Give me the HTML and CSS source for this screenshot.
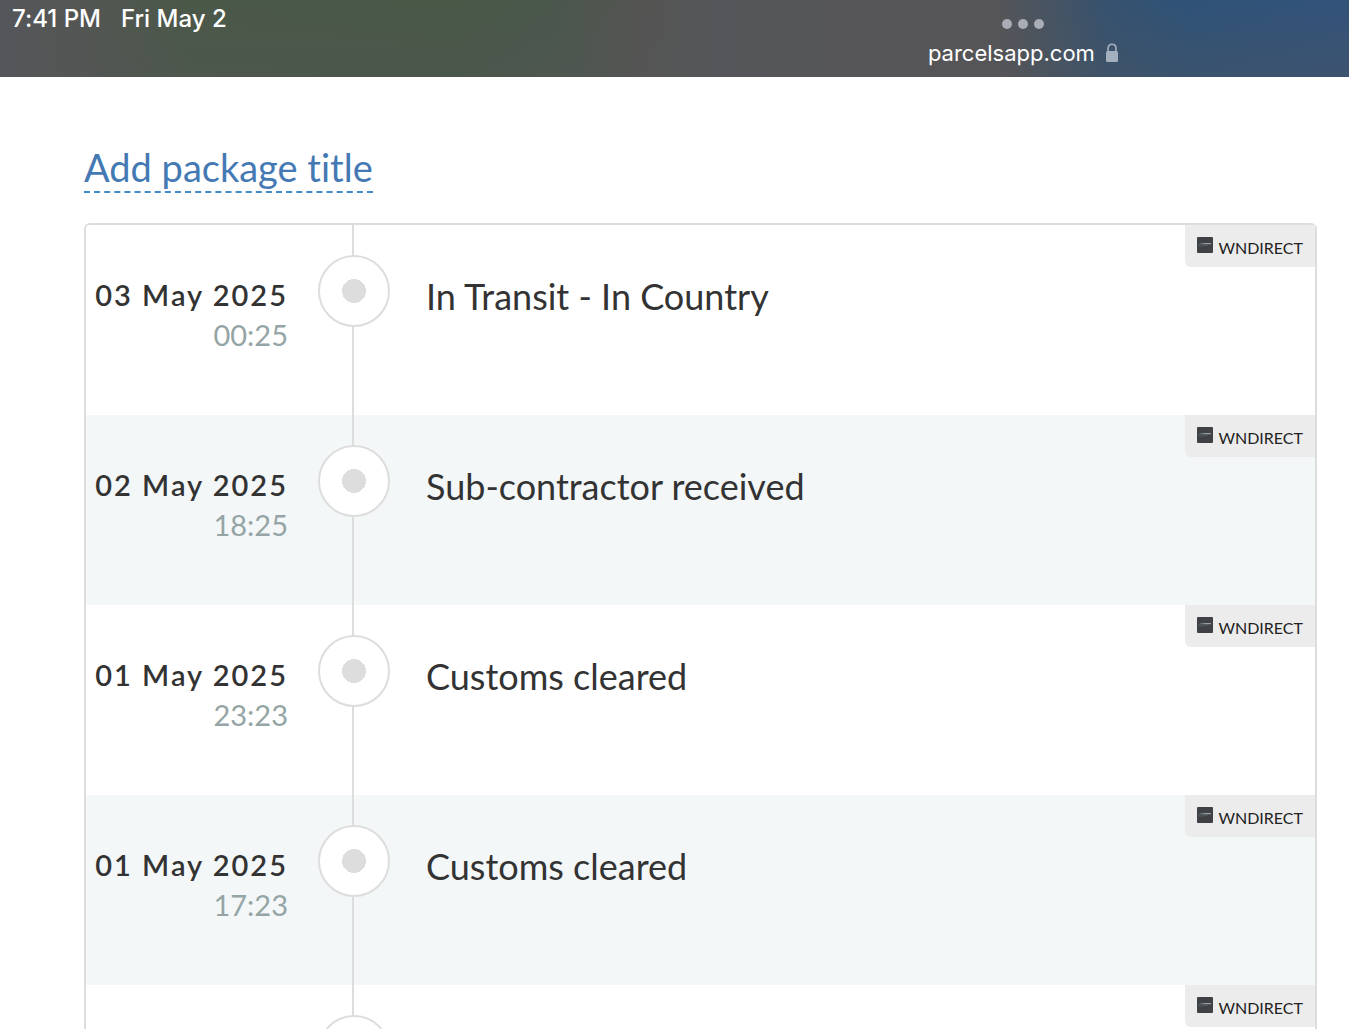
FILE: index.html
```
<!DOCTYPE html>
<html lang="en">

<head>
    <title>Parcel tracking</title>
    <meta charset="UTF-8">
    <meta name="viewport" content="width=device-width, initial-scale=1">
    <link rel="stylesheet" href="styles.css">
</head>

<body>
    <header class="topbar">
        <div class="clock">
            <time>7:41 PM</time>
            <span>Fri May 2</span>
        </div>
        <div class="address">
            <button type="button" class="dots" aria-label="Window options">
                <svg width="42" height="10" viewBox="0 0 42 10">
                    <circle cx="5" cy="5" r="5"/>
                    <circle cx="21" cy="5" r="5"/>
                    <circle cx="37" cy="5" r="5"/>
                </svg>
            </button>
            <div class="url">
                <span>parcelsapp.com</span>
                <svg class="lock" width="14" height="20" viewBox="0 0 14 20">
                    <path d="M3 9V5.500C3 2.800 4.700 1.200 7 1.200S11 2.800 11 5.500V9" fill="none" stroke="#a5b0bf" stroke-width="1.600"/>
                    <rect x="1" y="8" width="12" height="11" rx="1.500" fill="#a5b0bf"/>
                </svg>
            </div>
        </div>
    </header>
    <main>
        <a href="#" class="package-title">Add package title</a>
        <ul class="events">
            <li class="event">
                <div class="when"><strong>03 May 2025</strong><span>00:25</span></div>
                <div class="marker"></div>
                <div class="what">In Transit - In Country</div>
                <div class="carrier"><svg width="16" height="16"><use href="#wn"/></svg>WNDIRECT</div>
            </li>
            <li class="event">
                <div class="when"><strong>02 May 2025</strong><span>18:25</span></div>
                <div class="marker"></div>
                <div class="what">Sub-contractor received</div>
                <div class="carrier"><svg width="16" height="16"><use href="#wn"/></svg>WNDIRECT</div>
            </li>
            <li class="event">
                <div class="when"><strong>01 May 2025</strong><span>23:23</span></div>
                <div class="marker"></div>
                <div class="what">Customs cleared</div>
                <div class="carrier"><svg width="16" height="16"><use href="#wn"/></svg>WNDIRECT</div>
            </li>
            <li class="event">
                <div class="when"><strong>01 May 2025</strong><span>17:23</span></div>
                <div class="marker"></div>
                <div class="what">Customs cleared</div>
                <div class="carrier"><svg width="16" height="16"><use href="#wn"/></svg>WNDIRECT</div>
            </li>
            <li class="event">
                <div class="when"></div>
                <div class="marker"></div>
                <div class="what"></div>
                <div class="carrier"><svg width="16" height="16"><use href="#wn"/></svg>WNDIRECT</div>
            </li>
        </ul>
    </main>
    <svg width="0" height="0" class="sprite">
        <symbol id="wn" viewBox="0 0 16 16">
            <rect width="16" height="16" rx="1" fill="#3f4145"/>
            <path d="M1.500 8.500C2 6.500 5 6 7 6.300M2 9C5 9.500 8 8.500 11 7.800" fill="none" stroke="#5f7678" stroke-width=".6"/>
            <path d="M3.500 6.900H7" stroke="#8b9495" stroke-width=".8"/>
            <path d="M7 6.700H14" stroke="#b0b4b6" stroke-width="1"/>
        </symbol>
    </svg>
</body>

</html>
```
FILE: styles.css
```
html,
body {
    height: 100%;
}

body {
    display: flex;
    flex-direction: column;
    margin: 0;
    overflow: hidden;
    background-color: #fff;
    color: #333;
    font-family: Lato, "Open Sans", sans-serif;
    font-variant-ligatures: none;
}

.topbar {
    display: grid;
    grid-template-columns: 15fr 14fr;
    flex: none;
    height: 77px;
    color: #fff;
    font-family: Inter, Roboto, sans-serif;
    background:
        linear-gradient(rgba(84, 85, 88, 0), rgba(84, 85, 88, .3)),
        linear-gradient(90deg, #55565a 0%, #535653 6%, #4a5848 14%, #485847 34%, #4a574c 41%, #545552 47%, #545558 53%, #555557 74%, #465463 78%, #36526f 82%, #2f5277 88%, #33537a 100%);
}

.clock {
    display: flex;
    gap: 20px;
    padding: 4px 12px;
    font-size: 24px;
    font-weight: 500;
    line-height: 30px;
}

.address {
    display: flex;
    flex-direction: column;
    align-items: center;
}

.dots {
    display: block;
    height: 38px;
    padding: 10px 0 0;
    border: none;
    background: none;
    cursor: pointer;
}

.dots svg {
    display: block;
    fill: #a9adb5;
}

.url {
    display: flex;
    align-items: center;
    gap: 10px;
    font-size: 22px;
    line-height: 30px;
}

main {
    padding: 67px 32px 0 84px;
}

.package-title {
    display: inline-block;
    border-bottom: 2px dashed #428bca;
    color: #4579b3;
    font-size: 38px;
    line-height: 47px;
    text-decoration: none;
}

.events {
    margin: 30px 0 0;
    padding: 0;
    border: 2px solid #ddd;
    border-radius: 6px;
    list-style: none;
}

.event {
    position: relative;
    display: grid;
    grid-template-columns: 202px 72px 1fr;
    height: 190px;
}

.event:nth-child(even) {
    background-color: #f4f7f8;
}

.when {
    padding-top: 50px;
    text-align: right;
    font-size: 29px;
    line-height: 40px;
    white-space: nowrap;
}

.when strong {
    display: block;
    font-weight: 600;
    letter-spacing: 2px;
}

.when span {
    color: #95a5a6;
}

.marker {
    margin-left: 30px;
    width: 72px;
    background: linear-gradient(#ddd, #ddd) 34px 0 / 2px 100% no-repeat;
}

.marker::before {
    content: "";
    display: block;
    box-sizing: border-box;
    width: 72px;
    height: 72px;
    margin-top: 30px;
    border: 2px solid #ddd;
    border-radius: 50%;
    background: radial-gradient(circle, #ddd 12px, #fff 12px);
}

.what {
    padding: 49px 0 0 66px;
    font-size: 36px;
    line-height: 44px;
}

.carrier {
    position: absolute;
    top: 0;
    right: 0;
    display: flex;
    gap: 5px;
    padding: 12px 12px 8px;
    border-radius: 0 0 0 6px;
    background-color: #ececec;
    color: #222;
    font-size: 16px;
    line-height: 22px;
}

.sprite {
    position: absolute;
}
```
